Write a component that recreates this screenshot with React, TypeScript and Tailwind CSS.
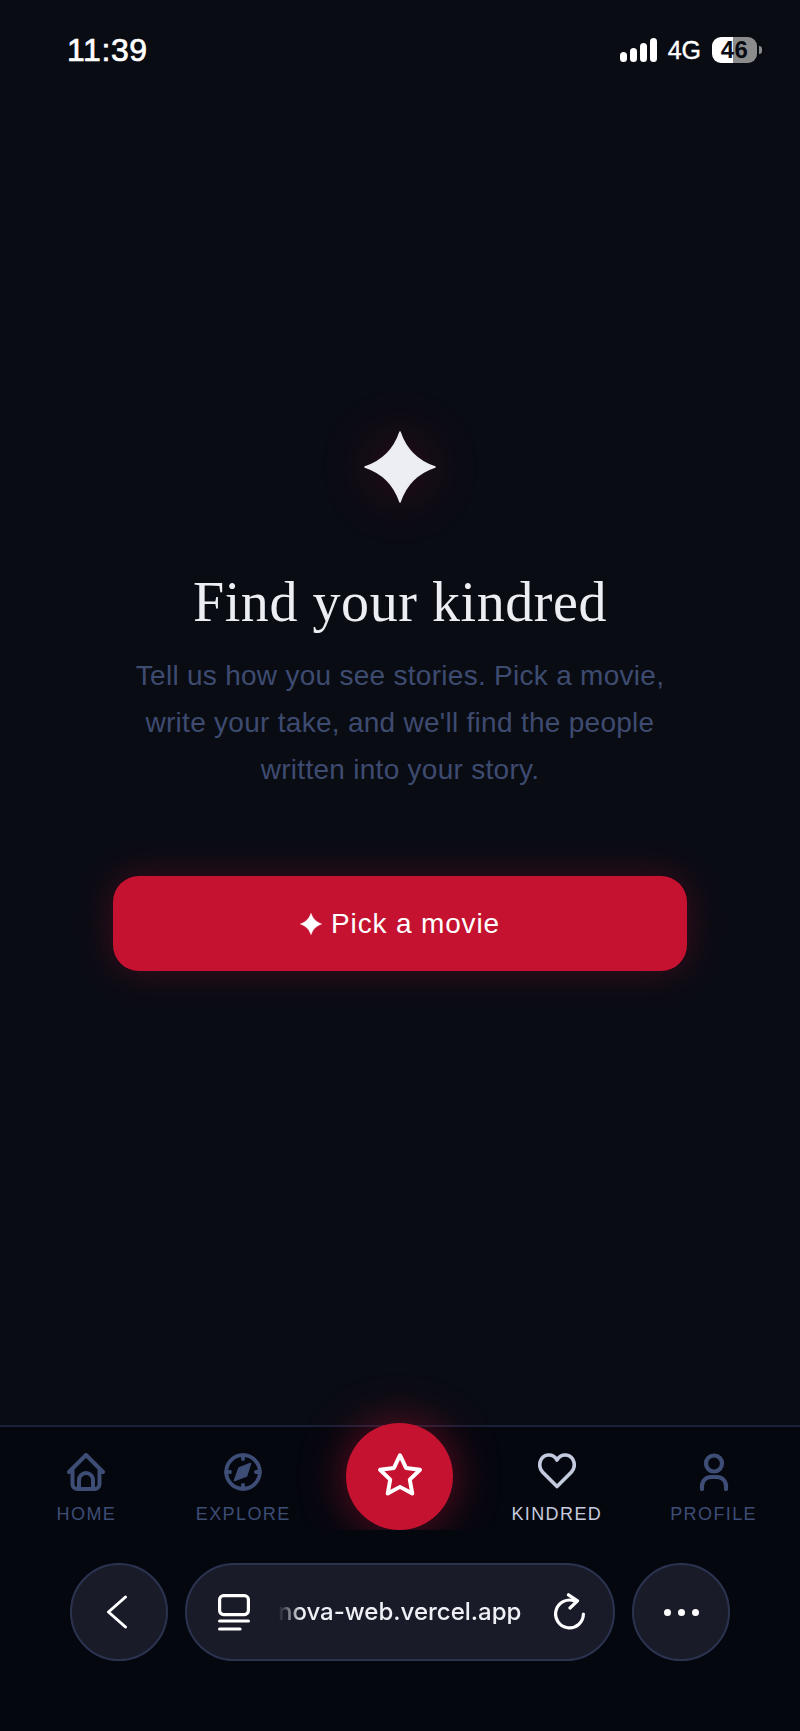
const NAV_ITEM = 'flex flex-col items-center pt-[26px]';
const NAV_LABEL = 'mt-[12px] text-[18px] leading-[22px] tracking-[1.4px]';

function Sparkle({ className }: { className: string }) {
  return (
    <svg viewBox="0 0 72 72" className={className} fill="currentColor">
      <path d="M36 1 C42 19 53 30 71 36 C53 42 42 53 36 71 C30 53 19 42 1 36 C19 30 30 19 36 1 Z" stroke="currentColor" strokeWidth="1.5" strokeLinejoin="round" />
    </svg>
  );
}

function HomeIcon() {
  return (
    <svg viewBox="0 0 38 38" className="h-[38px] w-[38px]" fill="none" stroke="currentColor" strokeWidth="4" strokeLinecap="round" strokeLinejoin="round">
      <path d="M2 19 L19 2 L36 19" />
      <path d="M5.5 17 V31 a5 5 0 0 0 5 5 H27.5 a5 5 0 0 0 5-5 V17" />
      <path d="M12 36 V27 a7 7 0 0 1 14 0 V36" />
    </svg>
  );
}

function CompassIcon() {
  return (
    <svg viewBox="0 0 38 38" className="h-[38px] w-[38px]" fill="none" stroke="currentColor" strokeWidth="3.8" strokeLinecap="round" strokeLinejoin="round">
      <circle cx="19" cy="19" r="16.8" />
      <path d="M19 2 V6 M19 32 V36 M2 19 H6 M32 19 H36" />
      <path d="M26.5 10.5 L22.5 23 L10.5 27.5 L15 15 Z" fill="currentColor" strokeWidth="1.6" />
    </svg>
  );
}

function HeartIcon() {
  return (
    <svg viewBox="0 0 38 36" className="h-[36px] w-[38px]" fill="none" stroke="currentColor" strokeWidth="3.6" strokeLinecap="round" strokeLinejoin="round">
      <path d="M19 33.5 L4.5 19 C-0.5 13.5 1.5 3 10 2 C14 1.6 17 3.6 19 7 C21 3.6 24 1.6 28 2 C36.5 3 38.5 13.5 33.5 19 Z" />
    </svg>
  );
}

function ProfileIcon() {
  return (
    <svg viewBox="0 0 38 38" className="h-[38px] w-[38px]" fill="none" stroke="currentColor" strokeWidth="4.2" strokeLinecap="round" strokeLinejoin="round">
      <circle cx="19" cy="10.5" r="8" />
      <path d="M7 36 V33 a9 9 0 0 1 9-9 h6 a9 9 0 0 1 9 9 v3" />
    </svg>
  );
}

function TabsIcon() {
  return (
    <svg viewBox="0 0 32 37" className="h-[37px] w-[32px]" fill="none" stroke="currentColor" strokeWidth="3.2" strokeLinecap="round" strokeLinejoin="round">
      <rect x="1.6" y="1.6" width="28.8" height="19" rx="4" />
      <path d="M1.6 27 H30.4 M1.6 35 H22" />
    </svg>
  );
}

function ReloadIcon() {
  return (
    <svg viewBox="0 0 32 38" className="h-[38px] w-[32px]" fill="none" stroke="currentColor" strokeWidth="3.2" strokeLinecap="round" strokeLinejoin="round">
      <path d="M21 8.2 A13.9 13.9 0 1 0 29.4 21" />
      <path d="M14.5 1.8 L23.5 7.8 L16 15" />
    </svg>
  );
}

export default function App() {
  return (
    <div className="flex h-[1731px] w-[800px] flex-col overflow-hidden bg-[#0a0c14] font-['Liberation_Sans',sans-serif]">
      {/* status bar */}
      <div className="flex h-[100px] shrink-0 items-center justify-between pl-[67px] pr-[38px] text-white">
        <span className="text-[32px] leading-none tracking-[0.6px] [-webkit-text-stroke:0.7px_white]">11:39</span>
        <div className="flex items-center">
          <div className="flex items-end gap-[3px]">
            <span className="h-[10px] w-[7px] rounded-full bg-white" />
            <span className="h-[14px] w-[7px] rounded-full bg-white" />
            <span className="h-[19px] w-[7px] rounded-full bg-white" />
            <span className="h-[24px] w-[7px] rounded-full bg-white" />
          </div>
          <span className="ml-[11px] text-[25px] leading-none [-webkit-text-stroke:0.4px_white]">4G</span>
          <div className="ml-[11px] flex h-[26px] w-[45px] items-center justify-center rounded-[9px] bg-[linear-gradient(90deg,#ffffff_47%,#8c8c8c_47%)] text-[24px] font-bold leading-none tracking-[0.5px] text-[#0a0c14]">
            46
          </div>
          <span className="ml-[2px] h-[8px] w-[3px] rounded-r-full bg-[#8c8c8c]" />
        </div>
      </div>

      {/* empty state */}
      <div className="flex flex-1 flex-col items-center pt-[331px]">
        <Sparkle className="h-[72px] w-[72px] text-[#eceef4] drop-shadow-[0_0_26px_rgba(196,18,48,0.3)]" />
        <h1 className="mt-[67px] font-['Liberation_Serif',serif] text-[56px] font-normal leading-[64px] tracking-[0.01em] text-[#eceef4]">
          Find your kindred
        </h1>
        <p className="mt-[18px] w-[600px] text-center text-[28px] leading-[47px] tracking-[0.01em] text-[#3e4b70]">
          Tell us how you see stories. Pick a movie,
          <br />
          write your take, and we'll find the people
          <br />
          written into your story.
        </p>
        <button
          type="button"
          className="mt-[83px] flex h-[95px] w-[574px] items-center justify-center gap-[9px] rounded-[26px] bg-[#c41230] text-[28px] tracking-[0.03em] text-white shadow-[0_0_36px_rgba(196,18,48,0.28)]"
        >
          <Sparkle className="h-[22px] w-[22px]" />
          Pick a movie
        </button>
      </div>

      {/* tab bar */}
      <nav className="grid h-[105px] shrink-0 grid-cols-5 border-t-2 border-[#1b2138] bg-[#05070f] px-[8px] text-[#3d4d75]">
        <div className={NAV_ITEM}>
          <HomeIcon />
          <span className={NAV_LABEL}>HOME</span>
        </div>
        <div className={NAV_ITEM}>
          <CompassIcon />
          <span className={NAV_LABEL}>EXPLORE</span>
        </div>
        <div className="flex justify-center">
          <div className="-mt-[4px] flex h-[107px] w-[107px] items-center justify-center rounded-full bg-[#c41230] text-white shadow-[0_0_44px_rgba(196,18,48,0.5)]">
            <svg viewBox="0 0 24 24" className="mb-[3px] h-[50px] w-[50px]" fill="none" stroke="currentColor" strokeWidth="1.9" strokeLinejoin="round">
              <polygon points="12 2.5 14.9 8.6 21.6 9.5 16.7 14.2 17.9 20.9 12 17.7 6.1 20.9 7.3 14.2 2.4 9.5 9.1 8.6" />
            </svg>
          </div>
        </div>
        <div className={`${NAV_ITEM} text-[#c5cbdf]`}>
          <HeartIcon />
          <span className="mt-[14px] text-[18px] leading-[22px] tracking-[1.4px]">KINDRED</span>
        </div>
        <div className={NAV_ITEM}>
          <ProfileIcon />
          <span className={NAV_LABEL}>PROFILE</span>
        </div>
      </nav>

      {/* browser chrome */}
      <div className="relative flex h-[201px] shrink-0 items-start gap-[17px] bg-[#05070f] px-[70px] pt-[33px] text-white">
        <div className="flex h-[98px] w-[98px] shrink-0 items-center justify-center rounded-full border-2 border-[#2b3350] bg-[#191c28]">
          <svg viewBox="0 0 22 34" className="mr-[4px] h-[34px] w-[22px]" fill="none" stroke="currentColor" strokeWidth="3" strokeLinecap="round" strokeLinejoin="round">
            <path d="M19.5 2 L2.5 17 L19.5 32" />
          </svg>
        </div>
        <div className="flex h-[98px] flex-1 items-center rounded-full border-2 border-[#2b3350] bg-[#191c28] pl-[31px] pr-[27px]">
          <TabsIcon />
          <span className="ml-[28px] flex-1 font-['Inter',sans-serif] text-[24px] font-medium leading-none text-[#eef0f5] [mask-image:linear-gradient(90deg,transparent,black_24px)]">
            nova-web.vercel.app
          </span>
          <ReloadIcon />
        </div>
        <div className="flex h-[98px] w-[98px] shrink-0 items-center justify-center gap-[7px] rounded-full border-2 border-[#2b3350] bg-[#191c28]">
          <span className="h-[7px] w-[7px] rounded-full bg-white" />
          <span className="h-[7px] w-[7px] rounded-full bg-white" />
          <span className="h-[7px] w-[7px] rounded-full bg-white" />
        </div>
      </div>
    </div>
  );
}
